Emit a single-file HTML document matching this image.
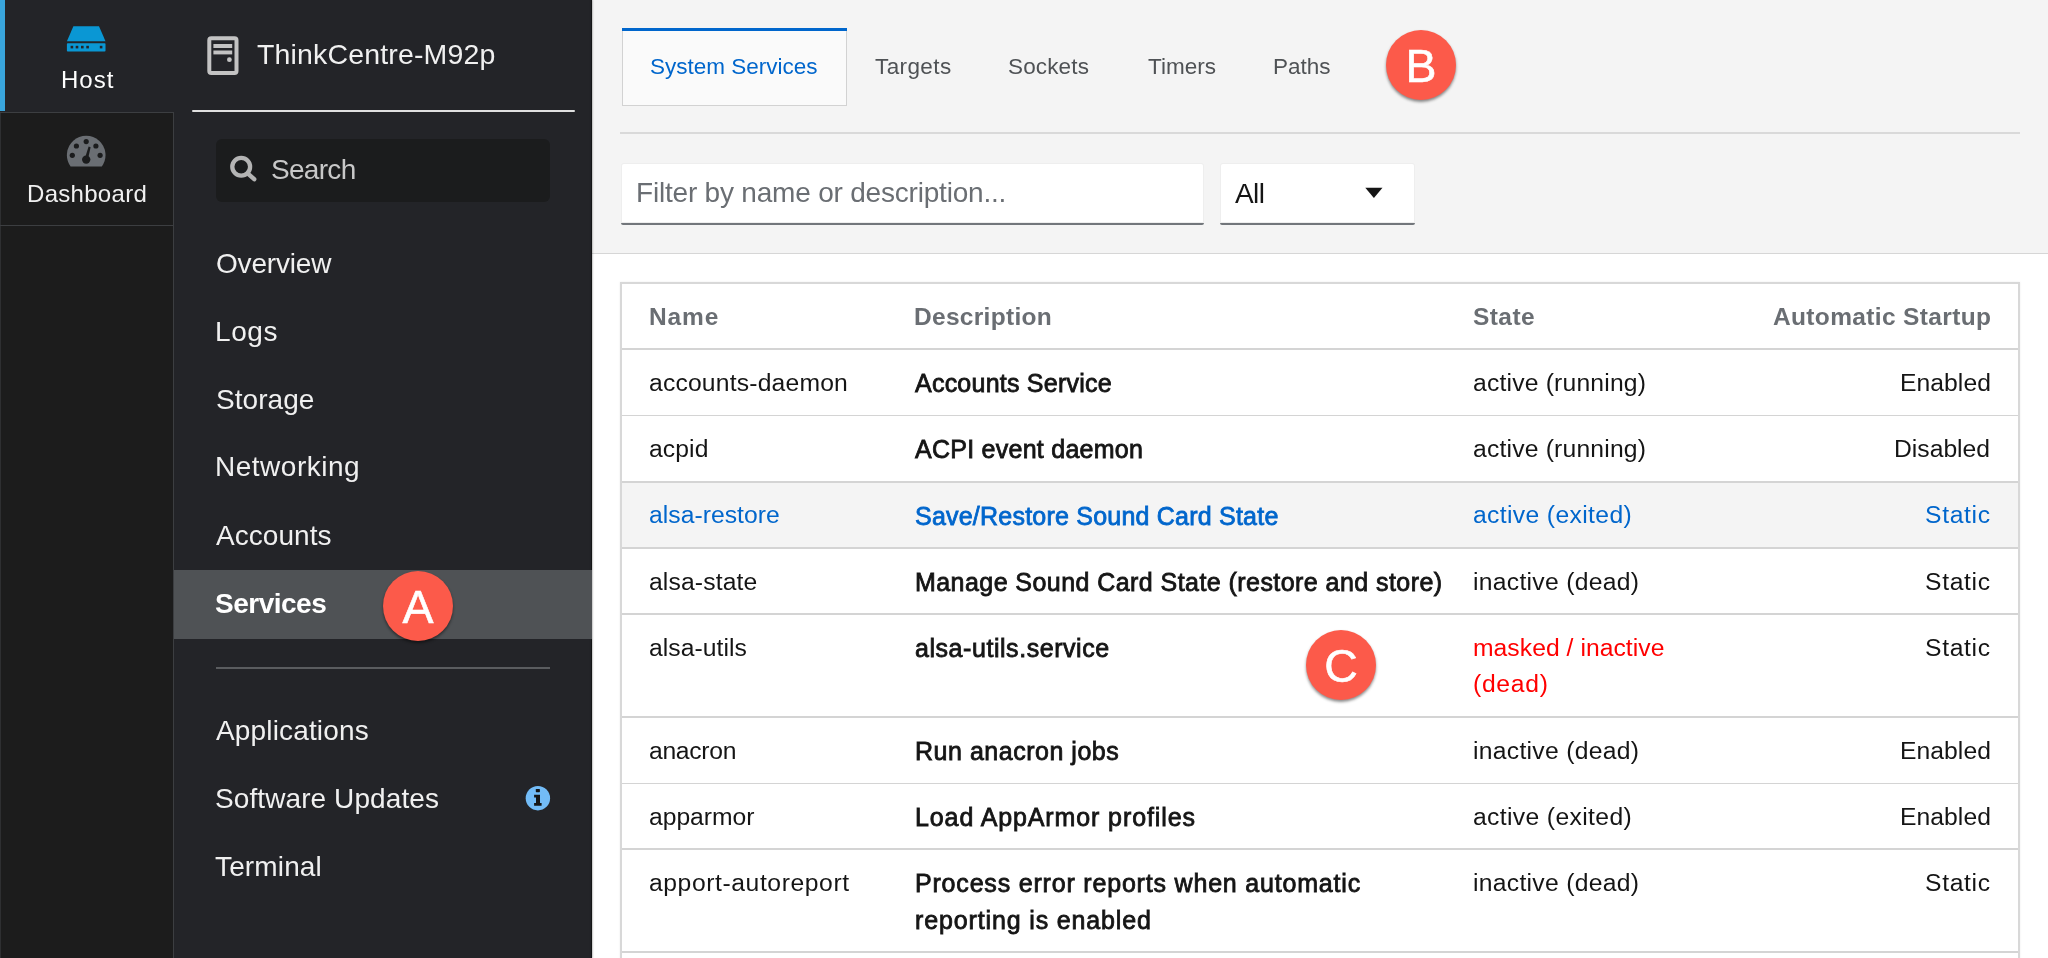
<!DOCTYPE html>
<html><head><meta charset="utf-8"><title>Services</title>
<style>
html,body{margin:0;padding:0;width:2048px;height:958px;overflow:hidden;background:#fff;}
body{position:relative;font-family:"Liberation Sans",sans-serif;}
.r{position:absolute;}
.t{position:absolute;white-space:nowrap;line-height:1;will-change:transform;}
.badge{position:absolute;border-radius:50%;background:#fc5a4a;box-shadow:0 2px 3px rgba(0,0,0,0.45);}
</style></head><body>
<div class="r" style="left:0px;top:0px;width:2048px;height:958px;background:#ffffff;"></div>
<div class="r" style="left:592px;top:0px;width:1456px;height:253px;background:#f4f4f4;"></div>
<div class="r" style="left:592px;top:253px;width:1456px;height:1px;background:#d6d6d6;"></div>
<div class="r" style="left:0px;top:0px;width:592px;height:958px;background:#232428;"></div>
<div class="r" style="left:0px;top:112px;width:174px;height:846px;background:#1c1c1c;"></div>
<div class="r" style="left:0px;top:112px;width:1px;height:846px;background:#2e2f31;"></div>
<div class="r" style="left:173px;top:112px;width:1px;height:846px;background:#3c3e41;"></div>
<div class="r" style="left:0px;top:112px;width:174px;height:1px;background:#3c3e41;"></div>
<div class="r" style="left:0px;top:225px;width:174px;height:1px;background:#3c3e41;"></div>
<div class="r" style="left:0px;top:0px;width:5px;height:111px;background:#39a5dc;"></div>
<div class="r" style="left:590.5px;top:0px;width:1.5px;height:958px;background:#141516;box-shadow:0.5px 0 1.5px rgba(0,0,0,0.45);"></div>
<svg class="r" style="left:60px;top:20px" width="52" height="40" viewBox="60 20 52 40">
<path d="M73.4 26.2 L99 26.2 L105.5 41.3 L66.9 41.3 Z" fill="#0a97d4"/>
<rect x="66.9" y="43.2" width="38.6" height="8.3" rx="0.8" fill="#0a97d4"/>
<rect x="70.6" y="45.8" width="2.6" height="2.6" fill="#232428"/>
<rect x="75.7" y="45.8" width="2.6" height="2.6" fill="#232428"/>
<rect x="81.0" y="45.8" width="2.6" height="2.6" fill="#232428"/>
<rect x="86.3" y="45.8" width="2.6" height="2.6" fill="#232428"/>
<rect x="99.8" y="45.8" width="2.6" height="2.6" fill="#232428"/>
</svg>
<div class="t" style="top:68.48px;font-size:24px;color:#ffffff;letter-spacing:1.0px;left:61.40px;">Host</div>
<svg class="r" style="left:60px;top:130px" width="52" height="42" viewBox="60 130 52 42">
<path d="M70.6 166.5 A19.3 19.3 0 1 1 101.8 166.5 Z" fill="#6a6e73"/>
<circle cx="86.2" cy="141.6" r="2.6" fill="#1b1c1d"/>
<circle cx="76.4" cy="146" r="2.6" fill="#1b1c1d"/>
<circle cx="95.9" cy="146" r="2.6" fill="#1b1c1d"/>
<circle cx="72.3" cy="155.3" r="2.6" fill="#1b1c1d"/>
<circle cx="100.1" cy="155.3" r="2.6" fill="#1b1c1d"/>
<circle cx="86.2" cy="159.6" r="4.2" fill="#1b1c1d"/>
<path d="M84.6 159.2 L88.6 146.6 L90.6 147.2 L87.8 160 Z" fill="#1b1c1d"/>
</svg>
<div class="t" style="top:181.98px;font-size:24px;color:#f0f0f0;letter-spacing:0.3px;left:27.00px;">Dashboard</div>
<svg class="r" style="left:200px;top:30px" width="46" height="52" viewBox="200 30 46 52">
<rect x="209.3" y="38.2" width="27.2" height="34.9" rx="2" fill="none" stroke="#c3c3c3" stroke-width="4"/>
<rect x="213.4" y="44" width="18.8" height="4" fill="#c3c3c3"/>
<rect x="213.4" y="50.5" width="18.8" height="3.9" fill="#c3c3c3"/>
<circle cx="229.4" cy="59.7" r="2.4" fill="#c3c3c3"/>
</svg>
<div class="t" style="top:40.07px;font-size:28.5px;color:#f0f0f0;letter-spacing:0.15px;left:256.50px;">ThinkCentre-M92p</div>
<div class="r" style="left:191.5px;top:109.8px;width:383.5px;height:2.0px;background:#e0e0e0;border-radius:1px;"></div>
<div class="r" style="left:216px;top:139px;width:334px;height:63px;background:#1b1c1d;border-radius:6px;"></div>
<svg class="r" style="left:225px;top:150px" width="36" height="36" viewBox="225 150 36 36">
<circle cx="241.2" cy="166.8" r="8.9" fill="none" stroke="#b4b4b4" stroke-width="4.3"/>
<line x1="247.6" y1="173.4" x2="254.2" y2="179.2" stroke="#b4b4b4" stroke-width="4.4" stroke-linecap="round"/>
</svg>
<div class="t" style="top:155.99px;font-size:28px;color:#c8c8c8;letter-spacing:-0.7px;left:271.40px;">Search</div>
<div class="t" style="top:249.69px;font-size:28px;color:#f0f0f0;letter-spacing:-0.19px;left:215.70px;">Overview</div>
<div class="t" style="top:317.89px;font-size:28px;color:#f0f0f0;letter-spacing:0.57px;left:214.70px;">Logs</div>
<div class="t" style="top:385.79px;font-size:28px;color:#f0f0f0;letter-spacing:0.05px;left:215.70px;">Storage</div>
<div class="t" style="top:453.49px;font-size:28px;color:#f0f0f0;letter-spacing:0.51px;left:214.70px;">Networking</div>
<div class="t" style="top:521.89px;font-size:28px;color:#f0f0f0;letter-spacing:0.06px;left:216.00px;">Accounts</div>
<div class="r" style="left:174px;top:569.5px;width:418px;height:69.79999999999995px;background:#4f5255;"></div>
<div class="t" style="top:589.79px;font-size:28px;color:#ffffff;font-weight:700;letter-spacing:-0.5px;left:215.00px;">Services</div>
<div class="r" style="left:216px;top:666.5px;width:334px;height:2.0px;background:#5a5c5f;"></div>
<div class="t" style="top:717.29px;font-size:28px;color:#f0f0f0;letter-spacing:0.15px;left:216.00px;">Applications</div>
<div class="t" style="top:784.79px;font-size:28px;color:#f0f0f0;letter-spacing:0.09px;left:215.00px;">Software Updates</div>
<div class="t" style="top:852.89px;font-size:28px;color:#f0f0f0;letter-spacing:0.14px;left:215.00px;">Terminal</div>
<svg class="r" style="left:522px;top:783px" width="31" height="31" viewBox="522 783 31 31">
<circle cx="537.9" cy="798.2" r="12.2" fill="#73bcf7"/>
<rect x="535.8" y="789" width="4.1" height="3.2" rx="0.6" fill="#151515"/>
<path d="M534.1 794.7 H540 V803 H541.6 V805.8 H534.1 V803 H536 V797.6 H534.1 Z" fill="#151515"/>
</svg>
<div class="r" style="left:622px;top:28px;width:225px;height:78px;background:#d2d2d2;"></div>
<div class="r" style="left:623px;top:29px;width:223px;height:76px;background:#fafafa;"></div>
<div class="r" style="left:622px;top:27.8px;width:225px;height:3.3999999999999986px;background:#0066cc;"></div>
<div class="t" style="top:55.65px;font-size:22.5px;color:#0066cc;left:650.30px;">System Services</div>
<div class="t" style="top:55.85px;font-size:22.5px;color:#4f5255;letter-spacing:0.4px;left:875.20px;">Targets</div>
<div class="t" style="top:55.85px;font-size:22.5px;color:#4f5255;letter-spacing:0.15px;left:1008.00px;">Sockets</div>
<div class="t" style="top:55.85px;font-size:22.5px;color:#4f5255;left:1148.00px;">Timers</div>
<div class="t" style="top:55.85px;font-size:22.5px;color:#4f5255;left:1273.00px;">Paths</div>
<div class="r" style="left:620px;top:132px;width:1400px;height:2px;background:#d9d9d9;"></div>
<div class="r" style="left:621px;top:163px;width:583px;height:62px;background:#eeeeee;border-radius:3px;"></div>
<div class="r" style="left:622px;top:164px;width:581px;height:58px;background:#ffffff;border-radius:2px 2px 0 0;"></div>
<div class="r" style="left:621px;top:222.5px;width:583px;height:2.0px;background:#72767b;border-radius:0 0 3px 3px;"></div>
<div class="t" style="top:179.39px;font-size:28px;color:#6a6e73;letter-spacing:-0.2px;left:636.40px;">Filter by name or description...</div>
<div class="r" style="left:1220px;top:163px;width:195px;height:62px;background:#eeeeee;border-radius:3px;"></div>
<div class="r" style="left:1221px;top:164px;width:193px;height:58px;background:#ffffff;border-radius:2px 2px 0 0;"></div>
<div class="r" style="left:1220px;top:222.5px;width:195px;height:2.0px;background:#72767b;border-radius:0 0 3px 3px;"></div>
<div class="t" style="top:179.79px;font-size:28px;color:#151515;letter-spacing:-0.6px;left:1234.70px;">All</div>
<svg class="r" style="left:1360px;top:183px" width="28" height="20" viewBox="1360 183 28 20">
<path d="M1365.3 187.8 L1382.5 187.8 L1373.9 197.9 Z" fill="#151515"/>
</svg>
<div class="r" style="left:620px;top:282px;width:1400px;height:708px;background:#ffffff;border:2px solid #d8d8d8;box-sizing:border-box;box-shadow:0 0 2px rgba(0,0,0,0.08);"></div>
<div class="r" style="left:622px;top:482px;width:1396px;height:65.5px;background:#f4f4f4;"></div>
<div class="r" style="left:621.8px;top:348px;width:1396.4px;height:1.6999999999999886px;background:#d4d4d4;"></div>
<div class="r" style="left:621.8px;top:414.5px;width:1396.4px;height:1.6999999999999886px;background:#d4d4d4;"></div>
<div class="r" style="left:621.8px;top:481px;width:1396.4px;height:1.6999999999999886px;background:#d4d4d4;"></div>
<div class="r" style="left:621.8px;top:547.3px;width:1396.4px;height:1.7000000000000455px;background:#d4d4d4;"></div>
<div class="r" style="left:621.8px;top:613.3px;width:1396.4px;height:1.7000000000000455px;background:#d4d4d4;"></div>
<div class="r" style="left:621.8px;top:716.0px;width:1396.4px;height:1.7000000000000455px;background:#d4d4d4;"></div>
<div class="r" style="left:621.8px;top:782.7px;width:1396.4px;height:1.7000000000000455px;background:#d4d4d4;"></div>
<div class="r" style="left:621.8px;top:848.0px;width:1396.4px;height:1.7000000000000455px;background:#d4d4d4;"></div>
<div class="r" style="left:621.8px;top:951.0px;width:1396.4px;height:1.7000000000000455px;background:#d4d4d4;"></div>
<div class="t" style="top:304.96px;font-size:24.5px;color:#6a6e73;font-weight:700;letter-spacing:0.9px;left:648.80px;">Name</div>
<div class="t" style="top:304.96px;font-size:24.5px;color:#6a6e73;font-weight:700;letter-spacing:0.3px;left:913.50px;">Description</div>
<div class="t" style="top:304.96px;font-size:24.5px;color:#6a6e73;font-weight:700;letter-spacing:0.42px;left:1473.00px;">State</div>
<div class="t" style="top:304.96px;font-size:24.5px;color:#6a6e73;font-weight:700;letter-spacing:0.35px;right:56.70px;">Automatic Startup</div>
<div class="t" style="top:370.69px;font-size:24.7px;color:#151515;letter-spacing:0.18px;left:649.20px;">accounts-daemon</div>
<div class="t" style="top:371.13px;font-size:25px;color:#151515;letter-spacing:0.23px;left:915.20px;-webkit-text-stroke:0.8px #151515;">Accounts Service</div>
<div class="t" style="top:370.69px;font-size:24.7px;color:#151515;letter-spacing:0.19px;left:1473.00px;">active (running)</div>
<div class="t" style="top:370.69px;font-size:24.7px;color:#151515;letter-spacing:0.05px;right:57.45px;">Enabled</div>
<div class="t" style="top:436.69px;font-size:24.7px;color:#151515;letter-spacing:0.1px;left:649.20px;">acpid</div>
<div class="t" style="top:437.13px;font-size:25px;color:#151515;letter-spacing:0.26px;left:915.20px;-webkit-text-stroke:0.8px #151515;">ACPI event daemon</div>
<div class="t" style="top:436.69px;font-size:24.7px;color:#151515;letter-spacing:0.19px;left:1473.00px;">active (running)</div>
<div class="t" style="top:436.69px;font-size:24.7px;color:#151515;letter-spacing:0.0px;right:57.50px;">Disabled</div>
<div class="t" style="top:503.19px;font-size:24.7px;color:#0066cc;letter-spacing:0.04px;left:649.20px;">alsa-restore</div>
<div class="t" style="top:503.63px;font-size:25px;color:#0066cc;letter-spacing:0.22px;left:915.20px;-webkit-text-stroke:0.8px #0066cc;">Save/Restore Sound Card State</div>
<div class="t" style="top:503.19px;font-size:24.7px;color:#0066cc;letter-spacing:0.36px;left:1473.00px;">active (exited)</div>
<div class="t" style="top:503.19px;font-size:24.7px;color:#0066cc;letter-spacing:0.66px;right:56.84px;">Static</div>
<div class="t" style="top:569.69px;font-size:24.7px;color:#151515;letter-spacing:0.14px;left:649.20px;">alsa-state</div>
<div class="t" style="top:570.13px;font-size:25px;color:#151515;letter-spacing:0.44px;left:915.20px;-webkit-text-stroke:0.8px #151515;">Manage Sound Card State (restore and store)</div>
<div class="t" style="top:569.69px;font-size:24.7px;color:#151515;letter-spacing:0.29px;left:1473.00px;">inactive (dead)</div>
<div class="t" style="top:569.69px;font-size:24.7px;color:#151515;letter-spacing:0.66px;right:56.84px;">Static</div>
<div class="t" style="top:635.69px;font-size:24.7px;color:#151515;letter-spacing:0.06px;left:649.20px;">alsa-utils</div>
<div class="t" style="top:636.13px;font-size:25px;color:#151515;letter-spacing:0.55px;left:915.20px;-webkit-text-stroke:0.8px #151515;">alsa-utils.service</div>
<div class="t" style="top:635.69px;font-size:24.7px;color:#ff0000;letter-spacing:0.04px;left:1473.00px;">masked / inactive</div>
<div class="t" style="top:671.69px;font-size:24.7px;color:#ff0000;letter-spacing:0.7px;left:1473.00px;">(dead)</div>
<div class="t" style="top:635.69px;font-size:24.7px;color:#151515;letter-spacing:0.66px;right:56.84px;">Static</div>
<div class="t" style="top:738.69px;font-size:24.7px;color:#151515;letter-spacing:-0.3px;left:649.20px;">anacron</div>
<div class="t" style="top:739.13px;font-size:25px;color:#151515;letter-spacing:0.52px;left:915.20px;-webkit-text-stroke:0.8px #151515;">Run anacron jobs</div>
<div class="t" style="top:738.69px;font-size:24.7px;color:#151515;letter-spacing:0.29px;left:1473.00px;">inactive (dead)</div>
<div class="t" style="top:738.69px;font-size:24.7px;color:#151515;letter-spacing:0.05px;right:57.45px;">Enabled</div>
<div class="t" style="top:804.69px;font-size:24.7px;color:#151515;letter-spacing:-0.03px;left:649.20px;">apparmor</div>
<div class="t" style="top:805.13px;font-size:25px;color:#151515;letter-spacing:0.89px;left:915.20px;-webkit-text-stroke:0.8px #151515;">Load AppArmor profiles</div>
<div class="t" style="top:804.69px;font-size:24.7px;color:#151515;letter-spacing:0.36px;left:1473.00px;">active (exited)</div>
<div class="t" style="top:804.69px;font-size:24.7px;color:#151515;letter-spacing:0.05px;right:57.45px;">Enabled</div>
<div class="t" style="top:870.69px;font-size:24.7px;color:#151515;letter-spacing:0.58px;left:649.20px;">apport-autoreport</div>
<div class="t" style="top:871.13px;font-size:25px;color:#151515;letter-spacing:0.81px;left:915.20px;-webkit-text-stroke:0.8px #151515;">Process error reports when automatic</div>
<div class="t" style="top:907.63px;font-size:25px;color:#151515;letter-spacing:0.86px;left:915.20px;-webkit-text-stroke:0.8px #151515;">reporting is enabled</div>
<div class="t" style="top:870.69px;font-size:24.7px;color:#151515;letter-spacing:0.29px;left:1473.00px;">inactive (dead)</div>
<div class="t" style="top:870.69px;font-size:24.7px;color:#151515;letter-spacing:0.66px;right:56.84px;">Static</div>
<div class="badge" style="left:383.0px;top:571.0px;width:70px;height:70px;"></div>
<div class="t" style="top:583.88px;font-size:46.5px;color:#ffffff;left:418.00px;transform:translateX(-50%);-webkit-text-stroke:0.6px #fff;">A</div>
<div class="badge" style="left:1386.0px;top:29.8px;width:70px;height:70px;"></div>
<div class="t" style="top:42.68px;font-size:46.5px;color:#ffffff;left:1421.00px;transform:translateX(-50%);-webkit-text-stroke:0.6px #fff;">B</div>
<div class="badge" style="left:1306.0px;top:630.3px;width:70px;height:70px;"></div>
<div class="t" style="top:643.18px;font-size:46.5px;color:#ffffff;left:1341.00px;transform:translateX(-50%);-webkit-text-stroke:0.6px #fff;">C</div>
</body></html>
